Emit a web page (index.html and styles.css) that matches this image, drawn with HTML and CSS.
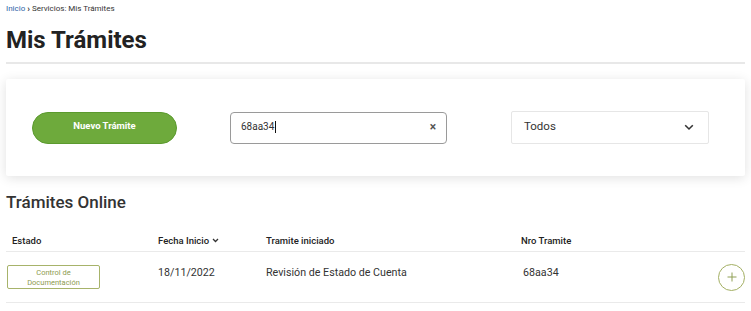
FILE: index.html
```html
<!DOCTYPE html>
<html lang="es">
<head>
<meta charset="utf-8">
<link rel="stylesheet" href="styles.css">
</head>
<body>
<div class="page">
  <nav class="crumbs"><a class="crumb-link">Inicio</a><span class="sep">›</span><span>Servicios: Mis Trámites</span></nav>
  <h1 class="title">Mis Trámites</h1>
  <div class="rule"></div>

  <section class="card">
    <button class="btn-new">Nuevo Trámite</button>
    <div class="search">
      <span class="search-text">68aa34</span><span class="caret"></span>
      <span class="clear">×</span>
    </div>
    <div class="select">
      <span>Todos</span>
      <svg class="chev" width="10" height="7" viewBox="0 0 10 7"><path d="M1.2 1.3 L5 5 L8.8 1.3" fill="none" stroke="#333" stroke-width="1.6"/></svg>
    </div>
  </section>

  <h2 class="subtitle">Trámites Online</h2>

  <div class="table">
    <div class="thead">
      <div class="c1">Estado</div>
      <div class="c2">Fecha Inicio <svg width="7" height="5" viewBox="0 0 7 5"><path d="M1 1 L3.5 3.5 L6 1" fill="none" stroke="#333" stroke-width="1.3"/></svg></div>
      <div class="c3">Tramite iniciado</div>
      <div class="c4">Nro Tramite</div>
      <div class="c5"></div>
    </div>
    <div class="trow">
      <div class="c1"><span class="badge">Control de<br>Documentación</span></div>
      <div class="c2">18/11/2022</div>
      <div class="c3">Revisión de Estado de Cuenta</div>
      <div class="c4">68aa34</div>
      <div class="c5"><span class="plus"><svg width="10" height="10" viewBox="0 0 10 10"><path d="M5 0.5 V9.5 M0.5 5 H9.5" stroke="#8f9f55" stroke-width="1"/></svg></span></div>
    </div>
  </div>
</div>
</body>
</html>
```

FILE: styles.css
```css
* { box-sizing: border-box; }
body {
  margin: 0;
  background: #fff;
  font-family: Roboto, "Liberation Sans", Arial, sans-serif;
  color: #333;
}
.page {
  padding: 3px 6px 0 6px;
}
.crumbs {
  font-size: 8px;
  line-height: 12px;
  color: #333;
  display: flex;
  align-items: center;
}
.crumb-link { color: #2d63a8; }
.sep { margin: 0 2px; color: #333; font-weight: 700; font-size: 9px; }
.title {
  margin: 11px 0 0 0;
  font-size: 24px;
  line-height: 28px;
  font-weight: 700;
  color: #222;
}
.rule {
  margin-top: 8px;
  height: 2px;
  background: #e8e8e8;
}
.card {
  margin-top: 15px;
  height: 97px;
  background: #fff;
  box-shadow: 0 2px 12px rgba(0,0,0,0.12);
  border-radius: 2px;
  display: flex;
  align-items: center;
  padding: 0 0 0 26px;
}
.btn-new {
  width: 145px;
  height: 32px;
  border-radius: 16px;
  border: 1px solid #5b9a2e;
  background: #6eaa3c;
  color: #fff;
  font-family: Roboto, "Liberation Sans", Arial, sans-serif;
  font-weight: 700;
  font-size: 9.5px;
  padding: 0 0 4px 0;
}
.search {
  margin-left: 53px;
  width: 217px;
  height: 32px;
  border: 1px solid #9a9a9a;
  border-radius: 4px;
  display: flex;
  align-items: center;
  padding: 0 0 2px 10px;
  font-size: 10px;
  color: #333;
}
.caret {
  display: inline-block;
  width: 1px;
  height: 12px;
  background: #111;
  margin-left: 1px;
}
.clear {
  margin-left: auto;
  margin-right: 10px;
  font-size: 12px;
  font-weight: 700;
  color: #555;
}
.select {
  margin-left: 64px;
  width: 198px;
  height: 33px;
  border: 1px solid #e6e6e6;
  border-radius: 2px;
  display: flex;
  align-items: center;
  padding: 0 14px 4px 12px;
  font-size: 11.5px;
  color: #333;
}
.chev { margin-left: auto; margin-top: 4px; }
.subtitle {
  margin: 15px 0 0 0;
  font-size: 17px;
  line-height: 22px;
  font-weight: 500;
  color: #333;
}
.table { margin-top: 18px; }
.thead, .trow {
  display: grid;
  grid-template-columns: 152px 108px 255px 1fr 40px;
}
.thead {
  font-size: 9.5px;
  font-weight: 500;
  color: #222;
  height: 21px;
  align-items: center;
  border-bottom: 1px solid #eaeaea;
  padding-bottom: 2px;
}
.thead .c1 { padding-left: 6px; }
.thead .c2 svg { margin-left: 1px; vertical-align: 1px; }
.trow {
  height: 51px;
  align-items: center;
  border-bottom: 1px solid #eaeaea;
  font-size: 10.7px;
  color: #333;
}
.trow .c4 { padding-left: 2px; }
.trow .c2, .trow .c3, .trow .c4 { padding-bottom: 10px; }
.badge {
  display: inline-block;
  margin-left: 1px;
  width: 93px;
  border: 1px solid #a7b36a;
  border-radius: 2px;
  font-size: 7.5px;
  line-height: 9.5px;
  color: #8d9b4f;
  text-align: center;
  padding: 2px 0 1px 0;
}
.c5 { display: flex; justify-content: flex-end; padding-right: 0; }
.plus {
  width: 27px;
  height: 27px;
  border-radius: 50%;
  border: 1px solid #a3af63;
  display: flex;
  align-items: center;
  justify-content: center;
}
```
